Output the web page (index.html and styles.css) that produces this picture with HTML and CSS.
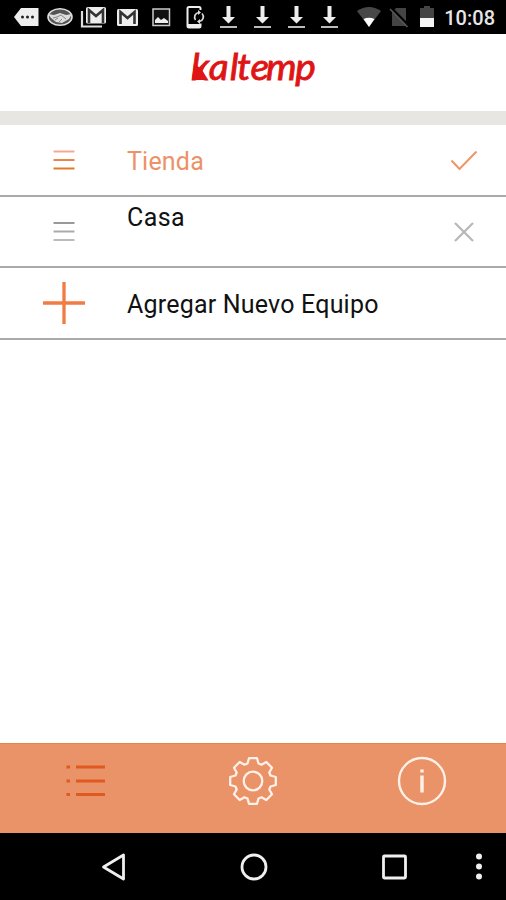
FILE: index.html
```html
<!DOCTYPE html>
<html lang="es">
<head>
    <meta charset="UTF-8">
    <meta name="viewport" content="width=device-width, initial-scale=1.0">
    <title>Kaltemp</title>
    <link rel="stylesheet" href="styles.css">
</head>
<body>
    <div class="status-bar">
        <div class="notifications">
            <svg viewBox="0 0 34 34"><path d="M4 17L11 8H28.500V26H11Z" fill="#eee"/><g fill="#222"><circle cx="12.500" cy="17" r="1.500"/><circle cx="17.500" cy="17" r="1.500"/><circle cx="22.500" cy="17" r="1.500"/></g></svg>
            <svg viewBox="0 0 34 34"><ellipse cx="16" cy="17" rx="12" ry="8.200" fill="#555" stroke="#ddd" stroke-width="1.600"/><path d="M4 14L10 15L16 13L22 15L28 14L25 19L18 23L12 22L7 18Z" fill="#ddd"/><path d="M9 18L13 17L17 15L22 19M11 20L14 18M15 22L18 19" stroke="#888" fill="none"/></svg>
            <svg viewBox="0 0 34 34"><path d="M5 11V26.500H25" fill="none" stroke="#ddd" stroke-width="2.200"/><rect x="9" y="7" width="20" height="16.500" rx="1.500" fill="#eee"/><path d="M12 23V10L19 16L26 10V23" fill="none" stroke="#333" stroke-width="2.600"/></svg>
            <svg viewBox="0 0 34 34"><rect x="6" y="9" width="21" height="17" rx="1.500" fill="#eee"/><path d="M9.500 24V12L16.500 18L23.500 12V24" fill="none" stroke="#333" stroke-width="2.600"/></svg>
            <svg viewBox="0 0 34 34"><rect x="8" y="9" width="16.500" height="16.500" fill="#111" stroke="#ccc" stroke-width="1.500"/><path d="M10 23V20L13 17L16 20L19 18L23 21V23Z" fill="#eee"/></svg>
            <svg viewBox="0 0 34 34"><path d="M22.500 10V8.500Q22.500 7 21 7H11Q9.500 7 9.500 8.500V26Q9.500 27.500 11 27.500H21Q22.500 27.500 22.500 26V23.500" fill="none" stroke="#eee" stroke-width="2"/><path d="M9.500 24H22.500V27H9.500Z" fill="#eee"/><path d="M17.500 20A4.800 4.800 0 0 1 20.500 12.500M24 13.500A4.800 4.800 0 0 1 21.500 21.500" fill="none" stroke="#ddd" stroke-width="1.700"/><path d="M20 10L23 12.500L20 15ZM22 19L19 21.500L22 24Z" fill="#ddd"/></svg>
            <svg viewBox="0 0 34 34"><path d="M14.500 6H18.500V17H23L16.500 23.500L10 17H14.500Z" fill="#eee"/><rect x="8" y="26" width="17" height="2" fill="#bbb"/></svg>
            <svg viewBox="0 0 34 34"><path d="M14.500 6H18.500V17H23L16.500 23.500L10 17H14.500Z" fill="#eee"/><rect x="8" y="26" width="17" height="2" fill="#bbb"/></svg>
            <svg viewBox="0 0 34 34"><path d="M14.500 6H18.500V17H23L16.500 23.500L10 17H14.500Z" fill="#eee"/><rect x="8" y="26" width="17" height="2" fill="#bbb"/></svg>
            <svg viewBox="0 0 34 34"><path d="M14.500 6H18.500V17H23L16.500 23.500L10 17H14.500Z" fill="#eee"/><rect x="8" y="26" width="17" height="2" fill="#bbb"/></svg>
        </div>
        <div class="system">
            <svg width="26" height="34" viewBox="0 0 26 34"><path d="M2 11Q14 3 26 11L14 27Z" fill="#484848"/><path d="M8.500 19Q14 16.500 19.500 19L14 27Z" fill="#fff"/></svg>
            <svg width="20" height="34" viewBox="0 0 20 34"><path d="M7 8H17V26H3V12Z" fill="#444"/><path d="M2 7.500L19.500 25.500" stroke="#000" stroke-width="2.500"/><path d="M1 9L18.500 27" stroke="#555" stroke-width="1.700"/></svg>
            <svg width="14" height="34" viewBox="0 0 14 34"><path d="M0 8H4V6H10V8H14V18H0Z" fill="#444"/><rect y="18" width="14" height="9" fill="#f4f4f4"/></svg>
            <span class="clock">10:08</span>
        </div>
    </div>

    <header>
        <svg class="logo" width="134" height="56" viewBox="0 0 134 56">
            <g transform="translate(4 30) scale(1.08 1)">
                <text x="0 16.500 36 42.500 55 69.500 96.500">kaltemp</text>
            </g>
            <path d="M7 13L14 19L20 12.500L15.500 21L20 30H5Z"/>
        </svg>
    </header>

    <main>
        <div class="row active">
            <svg class="handle" width="22" height="22" viewBox="0 0 22 22" fill="none" stroke-width="2"><path d="M0.500 2.500H21.500" stroke="#f4a699"/><path d="M0.500 11H21.500" stroke="#ea8550"/><path d="M0.500 19.500H21.500" stroke="#e27a25"/></svg>
            <span class="name">Tienda</span>
            <svg class="mark" width="28" height="22" viewBox="0 0 28 22"><path d="M1.500 11.500L9.500 20L26.500 2.500" fill="none" stroke="#ef9566" stroke-width="2"/></svg>
        </div>
        <div class="row second">
            <svg class="handle" width="22" height="22" viewBox="0 0 22 22" fill="none" stroke-width="2"><path d="M0.500 2H21.500" stroke="#999"/><path d="M0.500 10.500H21.500" stroke="#aaa"/><path d="M0.500 19H21.500" stroke="#bbb"/></svg>
            <span class="name">Casa</span>
            <svg class="mark" width="28" height="22" viewBox="0 0 28 22"><path d="M5 2L23 20M23 2L5 20" fill="none" stroke="#b5b5b5" stroke-width="2"/></svg>
        </div>
        <div class="row add">
            <svg class="plus" width="44" height="44" viewBox="0 0 44 44"><path d="M1 22H43M22 1V43" stroke="#f27a43" stroke-width="3.300"/></svg>
            <span class="name">Agregar Nuevo Equipo</span>
        </div>
    </main>

    <nav class="tabs">
        <svg width="50" height="50" viewBox="-25 -25 50 50" stroke="#e05a20" stroke-width="3" fill="none"><path d="M-9 -14H20M-9 0H20M-9 13.500H20M-18.500 -14H-15M-18.500 0H-15M-18.500 13.500H-15"/></svg>
        <svg width="50" height="50" viewBox="-25 -25 50 50" stroke="#fff1e8" stroke-width="2.300" stroke-linejoin="round" fill="none"><path d="M-5.500 -17.500L-4 -22.800H4L5.500 -17.500L8.500 -16.300L13.300 -19L19 -13.300L16.300 -8.500L17.500 -5.500L22.800 -4V4L17.500 5.500L16.300 8.500L19 13.300L13.300 19L8.500 16.300L5.500 17.500L4 22.800H-4L-5.500 17.500L-8.500 16.300L-13.300 19L-19 13.300L-16.300 8.500L-17.500 5.500L-22.800 4V-4L-17.500 -5.500L-16.300 -8.500L-19 -13.300L-13.300 -19L-8.500 -16.300Z"/><circle r="9.300"/></svg>
        <svg width="50" height="50" viewBox="-25 -25 50 50"><circle r="23" fill="none" stroke="#fff1e8" stroke-width="2.400"/><path d="M0 -5.500V11.500M0 -11.500V-8.500" stroke="#fff1e8" stroke-width="3.400"/></svg>
    </nav>

    <div class="nav-bar">
        <svg width="26" height="30" viewBox="0 0 26 30"><path d="M2.500 15L22.500 3V27Z"/></svg>
        <svg width="28" height="30" viewBox="0 0 28 30"><circle cx="14" cy="15" r="12"/></svg>
        <svg width="26" height="30" viewBox="0 0 26 30"><rect x="2.500" y="4" width="22" height="22" rx="1"/></svg>
        <svg class="more" width="8" height="30" viewBox="0 0 8 30"><circle cx="4" cy="4.500" r="3"/><circle cx="4" cy="14.500" r="3"/><circle cx="4" cy="24.500" r="3"/></svg>
    </div>
</body>
</html>
```

FILE: styles.css
```css
* {
    box-sizing: border-box;
}
body {
    font-family: Roboto, sans-serif;
    margin: 0;
    height: 900px;
    display: flex;
    flex-direction: column;
    background: #fff;
    color: #111;
    overflow: hidden;
}
svg {
    display: block;
    flex: none;
}
.status-bar {
    height: 34px;
    background: #000;
    display: flex;
    justify-content: space-between;
    padding: 0 11px 0 10px;
}
.notifications {
    display: grid;
    grid-template-columns: repeat(10, 33.7px);
}
.notifications svg {
    width: 34px;
    height: 34px;
}
.system {
    display: flex;
    align-items: center;
}
.system svg + svg {
    margin-left: 8px;
}
.system svg:nth-child(3) {
    margin-left: 11px;
}
.clock {
    margin-left: 10px;
    padding-top: 2px;
    color: #e6e6e6;
    font-size: 20px;
    font-weight: 500;
    line-height: 34px;
}
header {
    height: 91px;
    border-bottom: 14px solid #e8e6e2;
    display: flex;
    justify-content: center;
    padding-top: 16px;
}
.logo {
    margin-left: 2px;
    overflow: visible;
    fill: #df1515;
    font-family: Lato, sans-serif;
    font-size: 36px;
    font-style: italic;
}
.logo text {
    stroke: #df1515;
    stroke-width: 0.8;
}
main {
    flex: 1;
}
.row {
    height: 71px;
    border-bottom: 2px solid #aaa;
    display: grid;
    grid-template-columns: 127px 1fr 84px;
    align-items: center;
    font-size: 25px;
    letter-spacing: 0.2px;
}
.row.active {
    height: 72px;
    color: #ec9268;
}
.row.add {
    height: 72px;
}
.row > svg {
    justify-self: center;
}
.name {
    padding-top: 3px;
}
.second .name {
    align-self: start;
    padding-top: 6px;
    letter-spacing: 0.4px;
}
.tabs {
    height: 90px;
    background: #ea9268;
    border-top: 1px solid #e28251;
    display: grid;
    grid-template-columns: repeat(3, 1fr);
    justify-items: center;
    padding: 12px 0 0 1px;
}
.nav-bar {
    height: 67px;
    background: #000;
    display: flex;
    align-items: center;
    padding: 0 23px 0 101px;
}
.nav-bar svg {
    fill: none;
    stroke: #f0f0f0;
    stroke-width: 2.8;
    stroke-linejoin: round;
}
.nav-bar svg:nth-child(2) {
    margin-left: 113px;
}
.nav-bar svg:nth-child(3) {
    margin-left: 113px;
}
.nav-bar .more {
    margin-left: auto;
    fill: #f0f0f0;
    stroke: none;
}
```
